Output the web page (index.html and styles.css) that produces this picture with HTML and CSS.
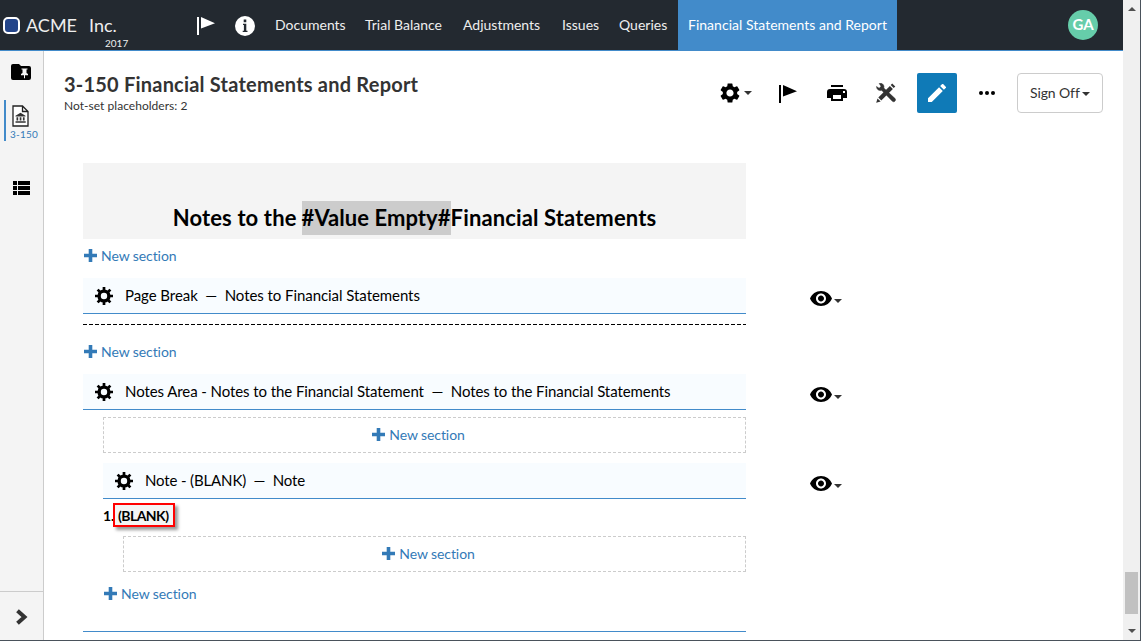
FILE: index.html
```
<!DOCTYPE html>
<html lang="en">
<head>
<meta charset="utf-8">
<title>3-150 Financial Statements and Report</title>
<link rel="stylesheet" href="styles.css">
</head>
<body>
<svg class="defs" aria-hidden="true">
  <symbol id="gear" viewBox="0 0 18 18"><circle cx="9" cy="9" r="4.900" fill="none" stroke="#000" stroke-width="3.400"/><path d="M9 0v3M9 15v3M0 9h3M15 9h3M2.600 2.600l2.200 2.200M13.200 13.200l2.200 2.200M2.600 15.400l2.200-2.200M13.200 4.800l2.200-2.200" stroke="#000" stroke-width="2.700"/></symbol>
  <symbol id="eye" viewBox="1 4.500 22 15"><path d="M12 4.500C7 4.500 2.730 7.610 1 12c1.730 4.390 6 7.500 11 7.500s9.270-3.110 11-7.500c-1.730-4.390-6-7.500-11-7.500zM12 17c-2.760 0-5-2.240-5-5s2.240-5 5-5 5 2.240 5 5-2.240 5-5 5zm0-8c-1.660 0-3 1.340-3 3s1.340 3 3 3 3-1.340 3-3-1.340-3-3-3z"/></symbol>
  <symbol id="plus" viewBox="0 0 13 13"><path d="M4.700 0h3.600v4.700H13v3.600H8.300V13H4.700V8.300H0V4.700h4.700z"/></symbol>
  <symbol id="flag" viewBox="0 0 18 18"><path d="M0 0h2v18H0zM4 0l14 6.200L4 11.500z"/></symbol>
</svg>
<div class="window">
  <div class="app">
    <header class="topbar">
      <div class="brand">
        <span class="brand-mark"></span>
        <span class="brand-name">ACME</span>
        <span class="brand-name inc">Inc.<span class="brand-year">2017</span></span>
      </div>
      <svg class="top-flag"><use href="#flag"/></svg>
      <svg class="top-info" viewBox="0 0 20 20"><circle cx="10" cy="10" r="10" fill="#fff"/><path d="M8.700 3.600h2.600v2.600H8.700zM8 7.800h3.300v6.900h1.200V16H7.700v-1.300h1.200V9.100H8z" fill="#232930"/></svg>
      <nav class="nav">
        <a class="n1">Documents</a><a class="n2">Trial Balance</a><a class="n3">Adjustments</a><a class="n4">Issues</a><a class="n5">Queries</a><a class="active">Financial Statements and Report</a>
      </nav>
      <span class="avatar">GA</span>
    </header>
    <div class="body">
      <aside class="sidebar">
        <svg class="side-folder" viewBox="0 0 20 16"><path fill-rule="evenodd" d="M2 0h6l2 2h8a2 2 0 0 1 2 2v10a2 2 0 0 1-2 2H2a2 2 0 0 1-2-2V2a2 2 0 0 1 2-2zM10.500 4.500v1h1v3.500l-1.500 1v1.200h3v3h1v-3h3V10l-1.500-1V5.500h1v-1z"/></svg>
        <div class="side-doc">
          <svg viewBox="0 0 17 22" width="17" height="22"><path d="M1 1h9.500L16 6.500V21H1zM10.500 1v5.500H16" fill="#fff" stroke="#222" stroke-width="1.300"/><path d="M3.500 10.700 8.500 7.700l5 3v.8h-10zM4.500 12.300h1.700v3.200H4.500zM7.700 12.300h1.700v3.200H7.700zM10.900 12.300h1.700v3.200h-1.700zM3.500 16.200h10.200v1.500H3.500z" fill="#333"/></svg>
          <span>3-150</span>
        </div>
        <svg class="side-list" viewBox="0 0 17 14"><path d="M0 0h4v4H0zM5 0h12v4H5zM0 5h4v4H0zM5 5h12v4H5zM0 10h4v4H0zM5 10h12v4H5z"/></svg>
        <div class="side-expand"><svg viewBox="0 0 12 16" width="12" height="16"><path d="M1.500 1.700 8.500 8l-7 6.300" fill="none" stroke="#333" stroke-width="4"/></svg></div>
      </aside>
      <main class="main">
        <div class="page-head">
          <div class="titles">
            <h1>3-150 Financial Statements and Report</h1>
            <p>Not-set placeholders: 2</p>
          </div>
          <div class="tools">
            <svg class="t-gear" viewBox="2 2 20 20"><path d="M19.140 12.940c.04-.3.060-.61.060-.94 0-.32-.02-.64-.07-.94l2.030-1.580a.49.49 0 0 0 .12-.61l-1.920-3.320a.488.488 0 0 0-.59-.22l-2.390.96c-.5-.38-1.030-.7-1.620-.94l-.36-2.540a.484.484 0 0 0-.48-.41h-3.840c-.24 0-.43.17-.47.41l-.36 2.540c-.59.24-1.130.57-1.620.94l-2.390-.96c-.22-.08-.47 0-.59.220L2.740 8.870c-.12.21-.08.47.12.61l2.030 1.580c-.05.3-.09.63-.09.94s.02.64.07.940l-2.030 1.580a.49.49 0 0 0-.12.610l1.920 3.320c.12.22.37.29.59.22l2.390-.96c.5.38 1.030.7 1.620.94l.36 2.540c.05.24.24.41.48.41h3.840c.24 0 .44-.17.47-.41l.36-2.540c.59-.24 1.130-.56 1.620-.94l2.390.96c.22.08.47 0 .59-.22l1.920-3.320c.12-.22.070-.47-.12-.61l-2.010-1.580zM12 15.600c-1.980 0-3.600-1.620-3.600-3.600s1.620-3.600 3.600-3.600 3.600 1.620 3.600 3.600-1.620 3.600-3.600 3.600z"/></svg>
            <i class="caret c-gear"></i>
            <svg class="t-flag"><use href="#flag"/></svg>
            <svg class="t-print" viewBox="0 0 20 16"><path fill-rule="evenodd" d="M4 0h12v2H4zM3 4h14a3 3 0 0 1 3 3v6h-4v3H4v-3H0V7a3 3 0 0 1 3-3zM6 10v4h8v-4zM16 6v2h2V6z"/></svg>
            <svg class="t-wrench" viewBox="0 0 20 20"><g fill="#333"><path d="M3.200.5c2-.9 4.700.5 4.800 3.200l-.2 1.300 11.300 10.600c1.500 1.500-1.100 4.200-2.700 2.700L5.600 7.200C3.500 8.100.6 6.800.5 3.500l2.700 1.800L5 3.300z" stroke="#333" stroke-width=".5"/><path d="m16.200.6 3.100 3-1.600 1.500-3-3zM13.900 2.900l3 3L5.300 17.400l-3-2.900zM1.500 15.400l3.200 3L.2 19.700z"/></g></svg>
            <span class="edit"><svg viewBox="3 3 18 18" width="18" height="18"><path fill="#fff" d="M3 17.250V21h3.750L17.810 9.940l-3.750-3.750L3 17.250zM20.710 7.040a.996.996 0 0 0 0-1.410l-2.340-2.340a.996.996 0 0 0-1.410 0l-1.830 1.830 3.750 3.750 1.830-1.830z"/></svg></span>
            <svg class="t-more" viewBox="0 0 16 4"><circle cx="2" cy="2" r="2"/><circle cx="8" cy="2" r="2"/><circle cx="14" cy="2" r="2"/></svg>
            <span class="signoff"><span>Sign Off</span><i class="caret"></i></span>
          </div>
        </div>
        <div class="doc">
          <div class="banner"><span class="b-a">Notes to the</span><mark>#Value Empty#</mark><span class="b-c">Financial Statements</span></div>
          <div class="new first"><svg><use href="#plus"/></svg><span>New section</span></div>
          <div class="row">
            <div class="bar"><svg><use href="#gear"/></svg><span class="l1">Page Break&nbsp; —&nbsp; Notes to Financial Statements</span></div>
            <div class="vis"><svg><use href="#eye"/></svg><i class="caret"></i></div>
          </div>
          <div class="page-break"></div>
          <div class="new second"><svg><use href="#plus"/></svg><span>New section</span></div>
          <div class="row">
            <div class="bar"><svg><use href="#gear"/></svg><span class="l2">Notes Area - Notes to the Financial Statement&nbsp; —&nbsp; Notes to the Financial Statements</span></div>
            <div class="vis"><svg><use href="#eye"/></svg><i class="caret"></i></div>
          </div>
          <div class="level1">
            <div class="drop"><div class="new"><svg><use href="#plus"/></svg><span>New section</span></div></div>
            <div class="row">
              <div class="bar"><svg><use href="#gear"/></svg><span class="l3">Note - (BLANK)&nbsp; —&nbsp; Note</span></div>
              <div class="vis"><svg><use href="#eye"/></svg><i class="caret"></i></div>
            </div>
            <div class="note"><span class="num">1.</span><span class="blank"><span>(BLANK)</span></span></div>
            <div class="drop inner"><div class="new"><svg><use href="#plus"/></svg><span>New section</span></div></div>
            <div class="new last"><svg><use href="#plus"/></svg><span>New section</span></div>
          </div>
          <div class="end-line"></div>
        </div>
      </main>
    </div>
  </div>
  <div class="scrollbar"><i class="up"></i><span class="thumb"></span><i class="down"></i></div>
</div>
</body>
</html>
```
FILE: styles.css
```
* { box-sizing: border-box; }
body { margin: 0; font-family: Lato, "Liberation Sans", sans-serif; background: #fff; color: #000; overflow: hidden; }
.defs { position: absolute; width: 0; height: 0; }
svg { display: block; flex: none; }
.window { display: flex; width: 1141px; height: 641px; border-right: 1px solid #4a525b; border-bottom: 1px solid #4a525b; }
.app { width: 1123px; flex: none; display: flex; flex-direction: column; }
.scrollbar { flex: 1; background: #f0f0f0; display: flex; flex-direction: column; align-items: center; }
.up, .down { width: 0; height: 0; border: 4px solid transparent; }
.up { border-top: 0; border-bottom-color: #505050; margin-top: 7px; }
.down { border-bottom: 0; border-top-color: #505050; margin-top: 15px; }
.thumb { width: 13px; height: 42px; margin-top: 561px; background: #c1c1c1; }

.topbar { height: 51px; flex: none; background: #232930; border-bottom: 1px solid #428bca; display: flex; align-items: center; color: #fff; }
.brand { width: 197px; padding-left: 3px; display: flex; align-items: center; flex: none; }
.brand-mark { width: 17px; height: 17px; border: 2px solid #fff; border-radius: 5px; background: #24458a; }
.brand-name { font-size: 18px; line-height: 22px; margin-left: 6px; color: #eee; }
.inc { margin-left: 12px; position: relative; }
.brand-year { position: absolute; left: 16px; top: 23px; font-size: 10px; line-height: 12px; }
.top-flag { width: 18px; height: 18px; fill: #fff; margin-top: 1px; }
.top-info { width: 20px; height: 20px; margin: 1px 0 0 20px; }
.nav { display: flex; align-self: stretch; margin-left: 10px; height: 50px; }
.nav a { font-size: 14px; line-height: 50px; padding: 0 10px; color: #eee; white-space: nowrap; }
.n1 { width: 90px; } .n2 { width: 98px; } .n3 { width: 99px; } .n4 { width: 57px; } .n5 { width: 69px; }
.nav .active { width: 219px; background: #428bca; color: #fff; letter-spacing: .02px; }
.avatar { margin-left: auto; margin-right: 25px; width: 30px; height: 30px; border-radius: 50%; background: #66cdaa; font-size: 15px; font-weight: 700; line-height: 29px; text-align: center; }

.body { flex: 1; display: flex; min-height: 0; }
.sidebar { width: 44px; flex: none; background: #f4f4f4; border-right: 1px solid #ccc; display: flex; flex-direction: column; }
.side-folder { width: 20px; height: 16px; margin: 13px 0 0 11px; }
.side-doc { height: 41px; margin: 20px 0 0 4px; border-left: 2px solid #428bca; padding: 5px 0 0 6px; color: #337ab7; }
.side-doc span { display: block; font-size: 10px; line-height: 12px; margin: 1px 0 0 -2px; letter-spacing: .2px; }
.side-list { width: 17px; height: 14px; margin: 40px 0 0 13px; }
.side-expand { margin-top: auto; height: 49px; border-top: 1px solid #ccc; padding: 17px 0 0 16px; }

.main { flex: 1; min-width: 0; display: flex; flex-direction: column; }
.page-head { display: flex; height: 112px; padding: 22px 20px 0; }
.titles { width: 655px; color: #333; }
h1 { margin: -1px 0 0; font-size: 20px; line-height: 24px; font-weight: 700; letter-spacing: .21px; white-space: nowrap; }
p { margin: 2px 0 0; font-size: 12px; line-height: 15px; letter-spacing: .03px; }
.tools { display: flex; align-items: center; height: 40px; flex: none; }
.t-gear { width: 20px; height: 20px; margin-left: 1px; }
.caret { display: block; width: 0; height: 0; border: 4px solid transparent; border-top-color: #333; border-bottom: 0; flex: none; }
.c-gear { margin-left: 4px; }
.t-flag { width: 18px; height: 18px; margin: 2px 0 0 27px; }
.t-print { width: 20px; height: 16px; margin-left: 30px; }
.t-wrench { width: 20px; height: 20px; margin-left: 29px; }
.edit { width: 40px; height: 40px; margin-left: 21px; border-radius: 2px; background: #0f7ab7; display: flex; align-items: center; justify-content: center; }
.t-more { width: 16px; height: 4px; margin-left: 22px; }
.signoff { width: 86px; height: 40px; margin-left: 22px; border: 1px solid #ccc; border-radius: 4px; display: flex; align-items: center; padding: 0 0 1px 12px; gap: 3px; font-size: 14px; letter-spacing: -.1px; color: #333; white-space: nowrap; }
.signoff .caret { margin-top: 2px; margin-left: -1px; }

.doc { width: 663px; margin-left: 39px; }
.banner { height: 76px; padding-top: 38px; background: #f4f4f4; display: flex; align-items: flex-start; justify-content: center; font-size: 22px; line-height: 34px; font-weight: 700; letter-spacing: .13px; white-space: pre; }
.b-a { margin-right: 5px; }
mark { background: #ccc; color: #000; letter-spacing: .06px; }
.new { display: flex; align-items: center; gap: 4px; color: #337ab7; font-size: 14px; line-height: 18px; letter-spacing: -.08px; }
.new svg { width: 13px; height: 13px; fill: #337ab7; margin-top: -1px; }
.first { height: 34px; margin: 0 0 5px 1px; }
.row { display: flex; }
.bar { flex: 1; height: 36px; background: #f8fcff; border-bottom: 1px solid #428bca; display: flex; align-items: center; padding-left: 12px; gap: 12px; font-size: 15px; letter-spacing: -.08px; white-space: nowrap; }
.bar svg { width: 18px; height: 18px; }
.bar span { margin-top: -2px; }
.l1 { letter-spacing: -.06px; }
.vis { width: 32px; margin: 5px -96px 0 64px; display: flex; align-items: center; gap: 2px; }
.vis svg { width: 22px; height: 15px; }
.vis .caret { margin-top: 4px; }
.page-break { height: 1px; margin-top: 10px; background: repeating-linear-gradient(90deg, #000 0 4px, transparent 4px 6px); }
.second { height: 34px; margin: 10px 0 5px 1px; }
.level1 { margin-left: 20px; }
.l3 { letter-spacing: -.14px; }
.drop { height: 36px; margin: 7px 0 10px; border: 1px dashed #ccc; display: flex; align-items: center; justify-content: center; padding-right: 12px; }
.note { height: 37px; display: flex; padding-top: 4px; font-size: 14px; line-height: 26px; font-weight: 700; }
.num { width: 10px; white-space: nowrap; }
.blank { height: 24px; width: 62px; border: 2px solid #f00; background: #f4f4f4; box-shadow: 3px 3px 3px rgba(0,0,0,.4); line-height: 22px; padding-left: 3px; letter-spacing: -.55px; }
.inner { margin: 0 0 0 20px; }
.last { height: 34px; margin: 5px 0 0 1px; }
.end-line { height: 1px; margin-top: 20px; background: #428bca; }
```
